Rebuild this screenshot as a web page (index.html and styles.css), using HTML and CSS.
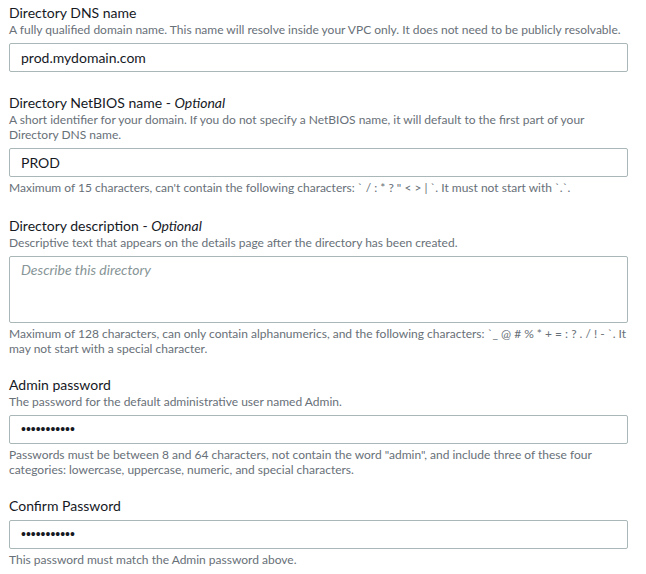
FILE: index.html
```html
<!DOCTYPE html>
<html lang="en">
<head>
<meta charset="utf-8">
<title>Directory details</title>
<link rel="stylesheet" href="styles.css">
</head>
<body>
<form class="form">
  <div class="field">
    <div class="label">Directory DNS name</div>
    <div class="desc">A fully qualified domain name. This name will resolve inside your VPC only. It does not need to be publicly resolvable.</div>
    <div class="input">prod.mydomain.com</div>
  </div>
  <div class="field">
    <div class="label">Directory NetBIOS name - <i>Optional</i></div>
    <div class="desc">A short identifier for your domain. If you do not specify a NetBIOS name, it will default to the first part of your Directory DNS name.</div>
    <div class="input">PROD</div>
    <div class="hint">Maximum of 15 characters, can't contain the following characters: ` / : * ? " &lt; &gt; | `. It must not start with `.`.</div>
  </div>
  <div class="field">
    <div class="label">Directory description - <i>Optional</i></div>
    <div class="desc">Descriptive text that appears on the details page after the directory has been created.</div>
    <div class="textarea"><span class="placeholder">Describe this directory</span></div>
    <div class="hint">Maximum of 128 characters, can only contain alphanumerics, and the following characters: `_ @ # % * + = : ? . / ! - `. It may not start with a special character.</div>
  </div>
  <div class="field field-tight">
    <div class="label">Admin password</div>
    <div class="desc">The password for the default administrative user named Admin.</div>
    <div class="input dots">•••••••••••</div>
    <div class="hint">Passwords must be between 8 and 64 characters, not contain the word "admin", and include three of these four categories: lowercase, uppercase, numeric, and special characters.</div>
  </div>
  <div class="field field-tight">
    <div class="label label-solo">Confirm Password</div>
    <div class="input dots">•••••••••••</div>
    <div class="hint">This password must match the Admin password above.</div>
  </div>
</form>
</body>
</html>
```

FILE: styles.css
```css
html, body {
  margin: 0;
  padding: 0;
  background: #ffffff;
}
body {
  font-family: Lato, "Liberation Sans", sans-serif;
  color: #16191f;
}
.form {
  width: 619px;
  padding: 4px 0 0 9px;
  display: flex;
  flex-direction: column;
  gap: 22px;
}
.field {
  display: flex;
  flex-direction: column;
}
.field-tight {
  margin-top: -2px;
}
.label {
  font-size: 14px;
  line-height: 18px;
  color: #16191f;
}
.label-solo {
  margin-bottom: 5px;
}
.desc {
  font-size: 12px;
  line-height: 15px;
  color: #687078;
  margin-bottom: 6px;
}
.hint {
  font-size: 12px;
  line-height: 15px;
  color: #687078;
  margin-top: 3px;
}
.input {
  box-sizing: border-box;
  height: 29px;
  border: 1px solid #aab7b8;
  border-radius: 2px;
  padding: 0 11px;
  font-size: 14px;
  line-height: 27px;
  color: #16191f;
}
.dots {
  font-family: "Liberation Sans", sans-serif;
  font-size: 14px;
  letter-spacing: 0;
}
.textarea {
  box-sizing: border-box;
  height: 67px;
  border: 1px solid #aab7b8;
  border-radius: 2px;
  padding: 4px 11px;
  font-size: 14px;
  line-height: 18px;
}
.placeholder {
  font-style: italic;
  color: #879596;
}
```
